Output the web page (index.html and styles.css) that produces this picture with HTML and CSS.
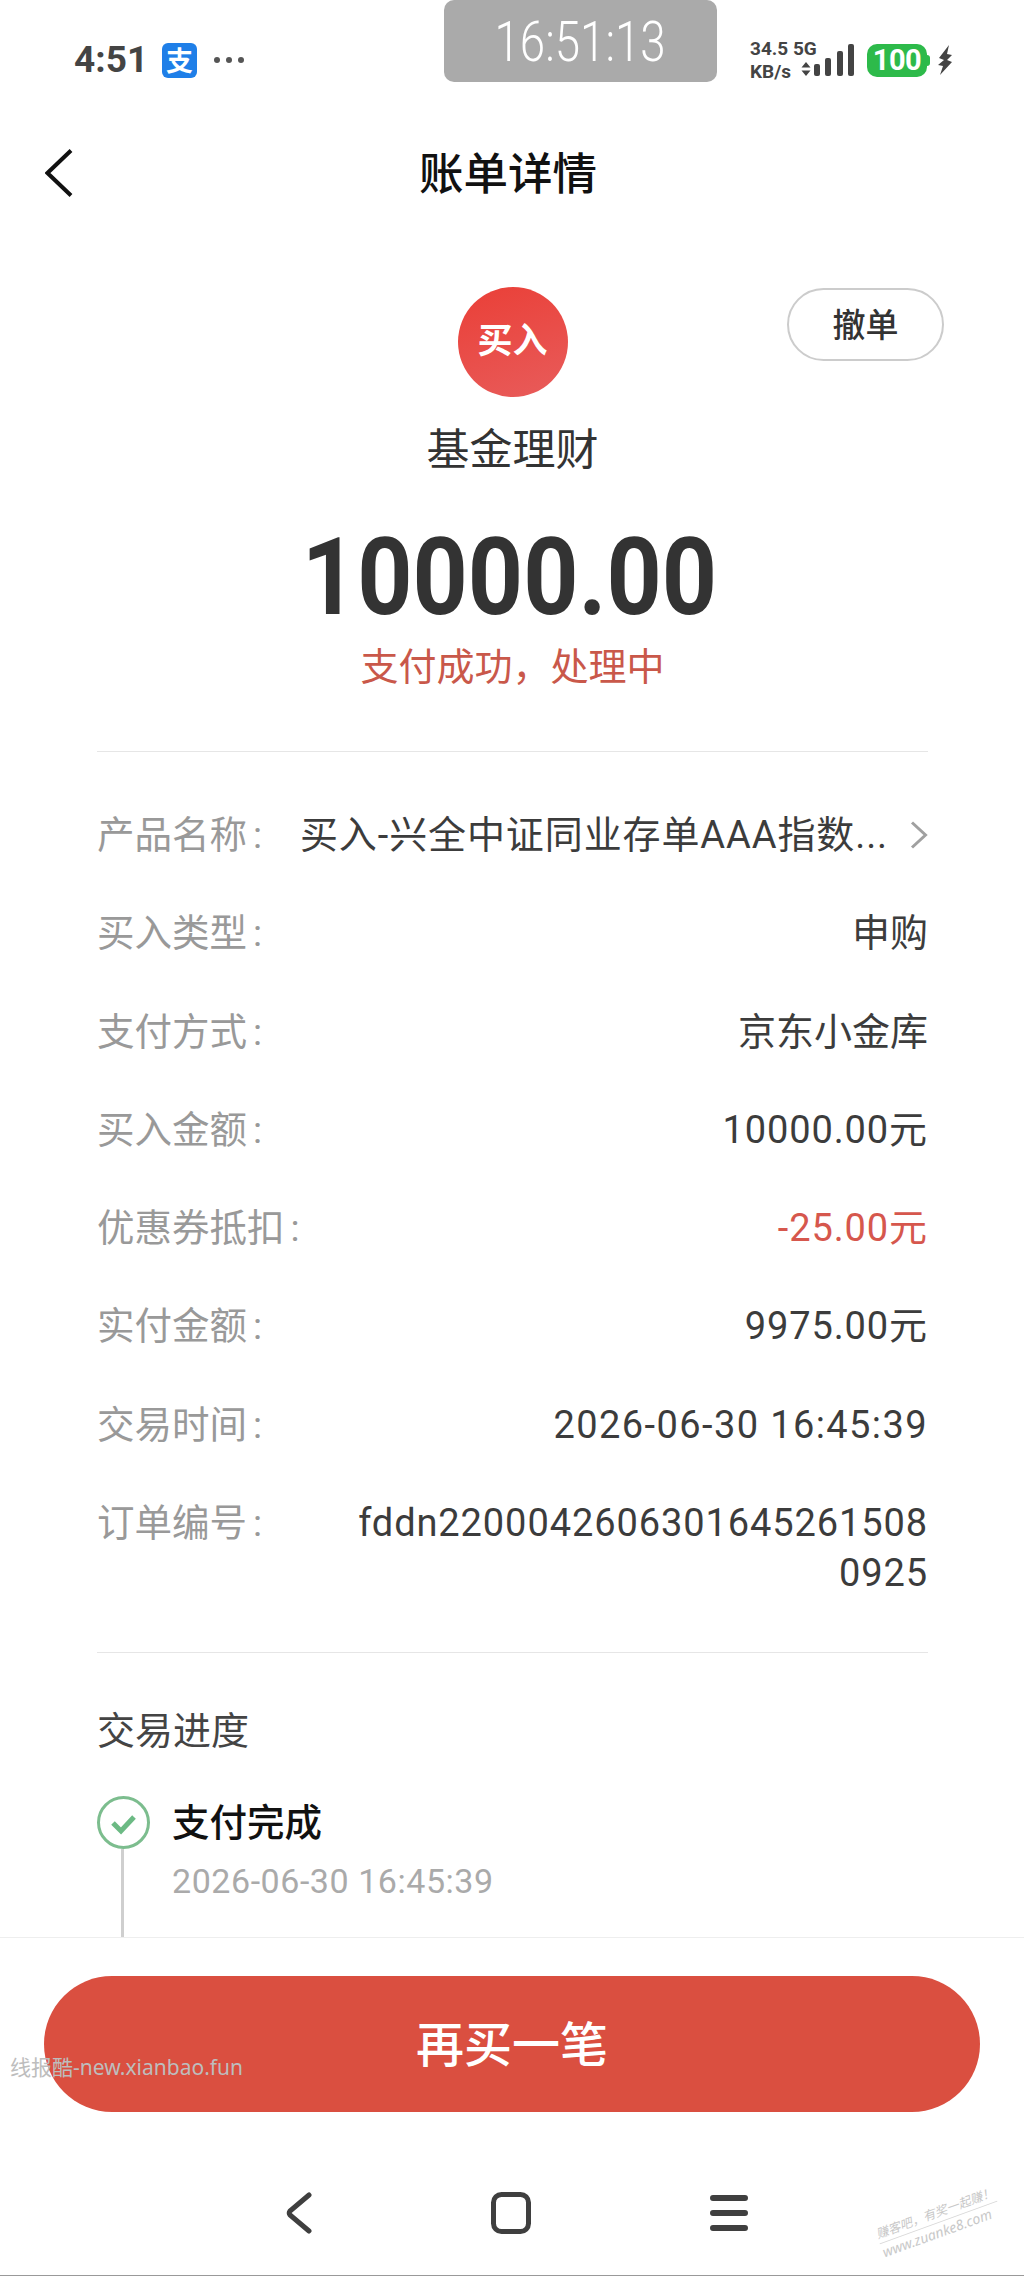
FILE: index.html
```html
<!DOCTYPE html>
<html lang="zh-CN">
<head>
<meta charset="utf-8">
<title>账单详情</title>
<link rel="stylesheet" href="styles.css">
</head>
<body>
<div class="page">
  <div class="status">
    <div class="status-left">
      <span class="clock">4:51</span>
      <span class="alipay">支</span>
      <span class="dots"><i></i><i></i><i></i></span>
    </div>
    <div class="status-right">
      <div class="net"><span>34.5 5G</span><span>KB/s</span></div>
      <svg class="signal" width="58" height="36" viewBox="0 0 58 36">
        <path class="sig-arrow" d="M5 18l4.500 5.500h-9zM5 32l4.500-5.500h-9z"/>
        <rect class="sig-bar" x="13" y="20" width="6" height="12" rx="2"/>
        <rect class="sig-bar" x="24" y="14" width="6" height="18" rx="2"/>
        <rect class="sig-bar" x="36" y="7" width="6" height="25" rx="2"/>
        <rect class="sig-bar" x="47" y="0" width="6" height="32" rx="2"/>
      </svg>
      <div class="battery">100</div>
      <svg class="bolt" width="16" height="30" viewBox="0 0 16 30">
        <path d="M12 0L2 13l5 2-6 5 5 1-3 9 12-13-5-2 5-5-5-1z"/>
      </svg>
    </div>
  </div>
  <div class="timebox"><span class="timebox-text">16:51:13</span></div>

  <div class="nav">
    <svg class="nav-back" width="28" height="48" viewBox="0 0 28 48">
      <path d="M26 1.500L2.500 24 26 46.500"/>
    </svg>
    <h1 class="nav-title">账单详情</h1>
  </div>

  <main class="content">
    <section class="hero">
      <div class="hero-top">
        <div class="badge">买入</div>
        <button class="cancel">撤单</button>
      </div>
      <div class="hero-name">基金理财</div>
      <div class="hero-amount">10000.00</div>
      <div class="hero-state">支付成功，处理中</div>
    </section>

    <section class="details">
      <div class="row">
        <span class="label">产品名称<span class="colon">:</span></span>
        <span class="value value-link"><span class="value-num">买入-兴全中证同业存单AAA指数...</span>
          <svg class="row-arrow" width="18" height="28" viewBox="0 0 18 28"><path d="M2 1.500L15.500 14 2 26.500"/></svg>
        </span>
      </div>
      <div class="row"><span class="label">买入类型<span class="colon">:</span></span><span class="value">申购</span></div>
      <div class="row"><span class="label">支付方式<span class="colon">:</span></span><span class="value">京东小金库</span></div>
      <div class="row"><span class="label">买入金额<span class="colon">:</span></span><span class="value value-num">10000.00元</span></div>
      <div class="row"><span class="label">优惠券抵扣<span class="colon">:</span></span><span class="value value-num value-red">-25.00元</span></div>
      <div class="row"><span class="label">实付金额<span class="colon">:</span></span><span class="value value-num">9975.00元</span></div>
      <div class="row"><span class="label">交易时间<span class="colon">:</span></span><span class="value value-num value-date">2026-06-30 16:45:39</span></div>
      <div class="row"><span class="label">订单编号<span class="colon">:</span></span><span class="value value-num value-wrap">fddn22000426063016452615080925</span></div>
    </section>

    <section class="progress">
      <h2 class="progress-title">交易进度</h2>
      <div class="step">
        <div class="step-marker">
          <svg width="53" height="53" viewBox="0 0 53 53">
            <circle cx="26.500" cy="26.500" r="25" class="step-ring"/>
            <path d="M16 27l8 8 13-14" class="step-check"/>
          </svg>
          <span class="step-line"></span>
        </div>
        <div class="step-body">
          <div class="step-title">支付完成</div>
          <div class="step-date">2026-06-30 16:45:39</div>
        </div>
      </div>
    </section>
  </main>

  <footer class="footer">
    <button class="buy">再买一笔</button>
    <div class="sysnav">
      <svg width="26" height="42" viewBox="0 0 26 42"><path class="sys-icon" d="M23 3L4 19q-1.500 2 0 4l19 16"/></svg>
      <svg width="40" height="42" viewBox="0 0 40 42"><rect class="sys-icon" x="2.500" y="2.500" width="35" height="37" rx="8"/></svg>
      <svg width="38" height="38" viewBox="0 0 38 38"><path class="sys-icon sys-menu" d="M3 4h32M3 19h32M3 34h32"/></svg>
    </div>
  </footer>

  <div class="mark-left">线报酷-new.xianbao.fun</div>
  <div class="mark-right"><span class="mark-top">赚客吧，有奖一起赚！</span><span>www.zuanke8.com</span></div>
</div>
</body>
</html>
```

FILE: styles.css
```css
* { box-sizing: border-box; }
html, body { margin: 0; padding: 0; background: #fff; }
body { font-family: "Roboto", "Noto Sans CJK SC", sans-serif; color: #333; }
.page { position: relative; width: 1024px; height: 2276px; display: flex; flex-direction: column; overflow: hidden; border-bottom: 1px solid #999; }

.status { height: 120px; flex: none; display: flex; justify-content: space-between; align-items: center; padding: 0 71px 0 74px; }
.status-left { display: flex; align-items: center; gap: 14px; }
.clock { font-size: 37px; font-weight: 700; color: #444; line-height: 40px; }
.alipay { width: 35px; height: 35px; border-radius: 6px; background: #1f7fe8; color: #fff; font: 700 27px/34px "Noto Sans CJK SC", sans-serif; text-align: center; }
.dots { display: flex; gap: 6px; margin-left: 3px; }
.dots i { width: 6px; height: 6px; border-radius: 50%; background: #555; }
.status-right { display: flex; align-items: center; }
.net { display: flex; flex-direction: column; width: 51px; font-size: 19px; font-weight: 700; line-height: 23px; color: #444; white-space: nowrap; }
.signal { margin-top: 4px; }
.sig-arrow, .sig-bar { fill: #444; }
.battery { position: relative; margin-left: 8px; width: 60px; height: 33px; border-radius: 10px; background: #2dba4a; color: #fff; font-size: 29px; font-weight: 700; line-height: 33px; letter-spacing: -.5px; text-align: center; }
.battery::after { content: ""; position: absolute; right: -3px; top: 11px; width: 3px; height: 11px; border-radius: 0 3px 3px 0; background: #2dba4a; }
.bolt { margin-left: 10px; }
.bolt path { fill: #444; }

.timebox { position: absolute; left: 444px; top: 0; width: 273px; height: 82px; border-radius: 10px; background: #aaaaaa; color: #fff; font: 300 55px/84px "Roboto", sans-serif; text-align: center; }
.timebox-text { display: inline-block; transform: scaleX(.83); }

.nav { height: 106px; flex: none; display: flex; align-items: center; justify-content: center; position: relative; padding: 0 8px 5px 0; }
.nav-back { position: absolute; left: 45px; top: 29px; }
.nav-back path { fill: none; stroke: #111; stroke-width: 4; }
.nav-title { margin: 0; font: 500 44.500px/60px "Noto Sans CJK SC", sans-serif; color: #111; }

.content { flex: 1; min-height: 0; overflow: hidden; padding: 61px 96px 0 97px; }
.hero { text-align: center; }
.hero-top { display: flex; justify-content: center; position: relative; }
.badge { width: 110px; height: 110px; border-radius: 50%; background: linear-gradient(160deg, #ea3f37, #e85c5b); color: #fff; font: 700 35px/101px "Noto Sans CJK SC", sans-serif; }
.cancel { position: absolute; right: -16px; top: 1px; width: 157px; height: 73px; border: 2px solid #ccc; border-radius: 37px; background: #fff; color: #333; font: 500 33px/1 "Noto Sans CJK SC", sans-serif; padding: 0 0 3px; }
.hero-name { margin-top: 19px; font: 400 43px/60px "Noto Sans CJK SC", sans-serif; color: #333; }
.hero-amount { margin-top: 51px; font: 700 108px/100px "Roboto", sans-serif; color: #333; transform: translateX(-3px) scaleX(.893); }
.hero-state { margin-top: 12px; font: 400 38px/50px "Noto Sans CJK SC", sans-serif; color: #c9584a; }

.details { margin-top: 62px; padding-top: 58px; border-top: 1px solid #e6e6e6; display: flex; flex-direction: column; gap: 48.300px; }
.row { display: flex; justify-content: space-between; font-size: 38px; line-height: 50px; }
.label { flex: none; color: #999; font-size: 37.500px; }
.colon { margin-left: 6px; }
.value { color: #3c3c3c; text-align: right; }
.value-num { letter-spacing: .9px; }
.value-date { letter-spacing: 1.400px; }
.value-link { display: flex; align-items: center; gap: 22px; white-space: nowrap; }
.row-arrow path { fill: none; stroke: #a0a0a0; stroke-width: 3; }
.value-red { color: #d6574d; }
.value-wrap { width: 570px; word-break: break-all; }

.progress { margin-top: 54px; border-top: 1px solid #e6e6e6; padding-top: 50px; }
.progress-title { margin: 0; font: 400 38px/50px "Noto Sans CJK SC", sans-serif; color: #444; }
.step { margin-top: 43px; display: flex; gap: 22px; }
.step-marker { width: 53px; flex: none; display: flex; flex-direction: column; align-items: center; }
.step-marker svg { display: block; }
.step-ring { fill: none; stroke: #7cbd8e; stroke-width: 3; }
.step-check { fill: none; stroke: #6cba84; stroke-width: 5; }
.step-line { width: 3px; height: 100px; background: #cfcfcf; margin-right: 3px; }
.step-body { margin-top: -1px; }
.step-title { font: 500 37.500px/50px "Noto Sans CJK SC", sans-serif; color: #111; }
.step-date { margin-top: 11px; font-size: 34px; line-height: 50px; letter-spacing: .55px; color: #aaa; }

.footer { height: 338px; flex: none; border-top: 1px solid #eee; background: #fff; padding: 38px 44px 0; position: relative; }
.buy { display: block; width: 100%; height: 136px; border: 0; border-radius: 68px; background: #da4f40; color: #fff; font: 500 48px/1 "Noto Sans CJK SC", sans-serif; padding: 0 0 6px; }
.sysnav { margin: 80px 0 0 242px; display: grid; grid-template-columns: 26px 40px 38px; justify-content: start; column-gap: 179px; align-items: center; }
.sysnav svg { display: block; }
.sys-icon { fill: none; stroke: #3f3f3f; stroke-width: 5; stroke-linecap: round; }
.sys-menu { stroke-width: 6; }

.mark-left { position: absolute; left: 10px; top: 2053px; font: 400 21px/28px "Noto Sans", "Noto Sans CJK SC", sans-serif; color: #bdbdbd; }
.mark-right { position: absolute; left: 876px; top: 2204px; display: flex; flex-direction: column; font: italic 400 14px/18px "Noto Sans", "Noto Sans CJK SC", sans-serif; color: #c8c8c8; transform: rotate(-20deg); white-space: nowrap; }
.mark-top { font-size: 12.500px; border-bottom: 1px solid #d8d8d8; }
```
